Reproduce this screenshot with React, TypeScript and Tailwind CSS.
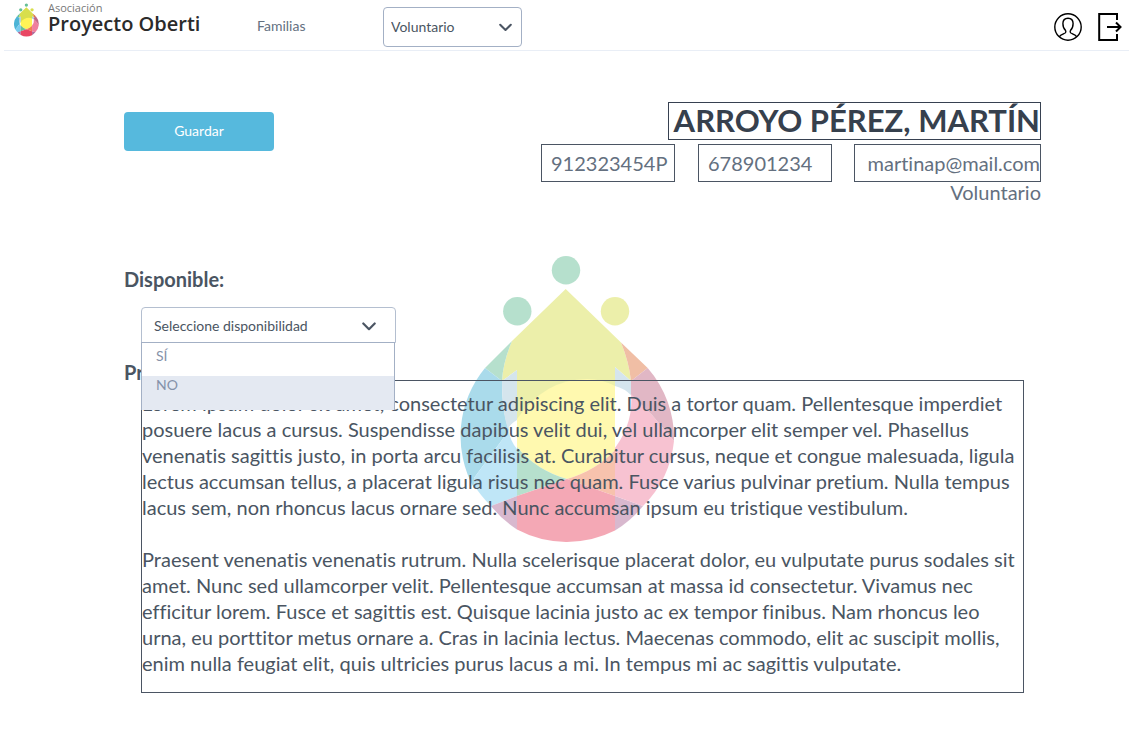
import { useState } from 'react';

function DropLogo({ className }: { className: string }) {
  return (
    <svg viewBox="459 256 216 287" className={className} aria-hidden="true">
      <circle cx="566" cy="270.3" r="14.2" fill="#4bb484" />
      <circle cx="517.3" cy="311.2" r="14.2" fill="#4bb484" />
      <circle cx="615" cy="311.2" r="14.2" fill="#d2d92d" />
      <path d="M565.7 289 L512 341 Q503 362 502 381 L517 370 V420 L530 425 L600 400 L615 388 V367 L631 381 Q629 362 621 342.5 Z" fill="#d2d92d" />
      <path d="M512 341 L485 368 L502 381 Q503 362 512 341 Z" fill="#4bb484" />
      <path d="M621 342.5 L647.7 368 L631 381 Q629 362 621 342.5 Z" fill="#da5e21" />
      <path d="M485 368 A107 107 0 0 0 474 488 V478 L502 440 L509 430 Q502 412 502 381 Z" fill="#2da7cf" />
      <path d="M474 478 L502 440 L508 428 Q510 441 517 449 V496 L491 506 Q480 495 474 485 Z" fill="#61c3ed" />
      <path d="M502 381 L517 370 V420 Q510 424 508 429 Q502 412 502 381 Z" fill="#98c0d4" />
      <path d="M615 367 L631 381 L632 396 Q624 388 615 386 Z" fill="#98c0d4" />
      <path d="M517 419 Q545 379 587 379 Q602 379 615 386 V450 Q597 470 567 479 Q536 470 517 447 Z" fill="#fff239" />
      <path d="M517 447 Q536 470 567 479 L517 496 Z" fill="#4bb484" />
      <path d="M615 450 Q597 470 567 479 L615 496 Z" fill="#ed6934" />
      <path d="M567 479 L517 496 V529.5 A107 107 0 0 0 615 530.5 V496 Z" fill="#e62848" />
      <path d="M491 506 L517 496 V529.5 A107 107 0 0 1 491 506 Z" fill="#a05087" />
      <path d="M643 506 L615 496 V530.5 A107 107 0 0 0 643 506 Z" fill="#a05087" />
      <path d="M631 393 Q634 422 615 448 V496 L643 506 A107 107 0 0 0 674 441 L652 415 Z" fill="#ed698e" />
      <path d="M647.7 368 A107 107 0 0 1 674 441 L652 415 L631 394 V381 Z" fill="#b64d70" />
    </svg>
  );
}

function Chevron({ className }: { className: string }) {
  return (
    <svg viewBox="0 0 14 9" className={className} fill="none" stroke="currentColor" strokeWidth="2.2" strokeLinecap="round" strokeLinejoin="round" aria-hidden="true">
      <path d="M1.3 1.5 L7 7.2 L12.7 1.5" />
    </svg>
  );
}

const observations = `Lorem ipsum dolor sit amet, consectetur adipiscing elit. Duis a tortor quam. Pellentesque imperdiet
posuere lacus a cursus. Suspendisse dapibus velit dui, vel ullamcorper elit semper vel. Phasellus
venenatis sagittis justo, in porta arcu facilisis at. Curabitur cursus, neque et congue malesuada, ligula
lectus accumsan tellus, a placerat ligula risus nec quam. Fusce varius pulvinar pretium. Nulla tempus
lacus sem, non rhoncus lacus ornare sed. Nunc accumsan ipsum eu tristique vestibulum.

Praesent venenatis venenatis rutrum. Nulla scelerisque placerat dolor, eu vulputate purus sodales sit
amet. Nunc sed ullamcorper velit. Pellentesque accumsan at massa id consectetur. Vivamus nec
efficitur lorem. Fusce et sagittis est. Quisque lacinia justo ac ex tempor finibus. Nam rhoncus leo
urna, eu porttitor metus ornare a. Cras in lacinia lectus. Maecenas commodo, elit ac suscipit mollis,
enim nulla feugiat elit, quis ultricies purus lacus a mi. In tempus mi ac sagittis vulputate.`;

const field = 'h-[38px] border border-[#4b5563] bg-transparent text-[20px] text-[#64707f] outline-none';

function Header() {
  return (
    <header className="ml-1 mr-[13px] flex h-[51px] items-start border-b border-[#e9eef6]">
      <a href="#inicio" className="flex w-[253px] shrink-0 gap-[9px] pl-[10px]">
        <DropLogo className="mt-[3px] h-[34px] w-[25px] opacity-85" />
        <span className="font-['Open_Sans',sans-serif]">
          <span className="block text-[11px] leading-4 text-[#777777]">Asociación</span>
          <span className="block text-[20px] leading-4 font-semibold text-[#2b2b2b]">Proyecto Oberti</span>
        </span>
      </a>
      <nav className="flex items-start pt-[7px]">
        <a href="#familias" className="w-[126px] text-[14px] leading-[38px] text-[#64707f]">Familias</a>
        <div className="relative">
          <select aria-label="Sección" className="h-10 w-[139px] appearance-none rounded border border-[#a3b0c5] bg-white px-[7px] pb-[2px] text-[14px] text-[#4a5562] outline-none">
            <option>Voluntario</option>
          </select>
          <Chevron className="pointer-events-none absolute top-4 right-[10px] h-[9px] w-[13px] text-[#4b5563]" />
        </div>
      </nav>
      <div className="ml-auto flex gap-4 pt-[13px] pr-[7px] text-black">
        <button type="button" aria-label="Perfil">
          <svg viewBox="0 0 28 28" className="size-7" fill="none" stroke="currentColor" strokeWidth="1.4">
            <circle cx="14" cy="14" r="13.2" />
            <path d="M5.2 23.8 C6.5 21.6 9.5 21 11.2 20 C12 19.5 11.9 18.2 11.5 17.4 C9.8 16 8.9 13.4 8.9 10.6 C8.9 7.2 11 5.2 14 5.2 C17 5.2 19.1 7.2 19.1 10.6 C19.1 13.4 18.2 16 16.5 17.4 C16.1 18.2 16 19.5 16.8 20 C18.5 21 21.5 21.6 22.8 23.8" />
          </svg>
        </button>
        <button type="button" aria-label="Salir">
          <svg viewBox="0 0 24 28" className="h-7 w-6" fill="none" stroke="currentColor" strokeWidth="2">
            <path d="M19 7 V1 H1.2 V27 H19 V21" />
            <path d="M9 14 H22.5 M18 9.5 L22.5 14 L18 18.5" />
          </svg>
        </button>
      </div>
    </header>
  );
}

export default function App() {
  const [available, setAvailable] = useState('');
  const [open, setOpen] = useState(true);

  const choose = (value: string) => {
    setAvailable(value);
    setOpen(false);
  };

  return (
    <div className="bg-white font-['Lato',sans-serif] [font-variant-ligatures:none]">
      <Header />
      <main className="relative mr-3 ml-1 pr-[89px] pb-10 pl-[120px]">
        <DropLogo className="pointer-events-none absolute top-[205px] left-1/2 h-[287px] w-[216px] -translate-x-1/2 opacity-40" />
        <form className="relative">
          <div className="flex items-start justify-between pt-[51px]">
            <button type="button" className="mt-[10px] h-[39px] w-[150px] rounded bg-[#56b9dd] pb-[2px] text-[14px] text-white">Guardar</button>
            <div className="flex flex-col items-end">
              <input aria-label="Nombre" defaultValue="ARROYO PÉREZ, MARTÍN" className="h-[38px] w-[373px] border border-[#374151] bg-transparent pb-[2px] text-right text-[31px] font-bold text-[#36404d] outline-none" />
              <div className="mt-1 flex">
                <input aria-label="DNI" defaultValue="912323454P" className={`${field} w-[134px] pl-[9px]`} />
                <input aria-label="Teléfono" defaultValue="678901234" className={`${field} ml-[23px] w-[134px] pl-[9px]`} />
                <input aria-label="Correo" defaultValue="martinap@mail.com" className={`${field} ml-[22px] w-[187px] text-right`} />
              </div>
              <p className="text-[20px] leading-5 text-[#64707f]">Voluntario</p>
            </div>
          </div>

          <div className="pt-[65px]">
            <label htmlFor="disponible" className="block text-[20px] leading-6 font-bold text-[#4a5562]">Disponible:</label>
            <div className="relative mt-4 ml-[17px] w-[255px]">
              <select
                id="disponible"
                value={available}
                onMouseDown={(e) => {
                  e.preventDefault();
                  setOpen(!open);
                }}
                onChange={(e) => choose(e.target.value)}
                className="block h-9 w-full appearance-none rounded-t border border-[#b4bfd0] bg-white px-3 text-[14px] text-[#4a5562] outline-none"
              >
                <option value="">Seleccione disponibilidad</option>
                <option value="SÍ">SÍ</option>
                <option value="NO">NO</option>
              </select>
              <Chevron className="pointer-events-none absolute top-[15px] right-5 h-[9px] w-[14px] text-[#4b5563]" />
              {open && (
                <ul className="absolute top-[35px] left-0 z-10 w-[254px] border-x border-t border-[#a3b0c5] bg-white text-[14px] leading-[18px] text-[#8592a9]">
                  <li>
                    <button type="button" onClick={() => choose('SÍ')} className="flex h-[33px] w-full px-[14px] pt-1">SÍ</button>
                  </li>
                  <li>
                    <button type="button" onClick={() => choose('NO')} className="flex h-[34px] w-full bg-[#e4e9f2] px-[14px]">NO</button>
                  </li>
                </ul>
              )}
            </div>
          </div>

          <div className="pt-[21px]">
            <label htmlFor="presentacion" className="block text-[20px] leading-4 font-bold text-[#4a5562]">Presentación:</label>
            <div className="pr-[17px] pl-[17px]">
              <textarea
                id="presentacion"
                rows={11}
                defaultValue={observations}
                className="block w-full resize-none overflow-hidden border border-[#4b5563] bg-transparent pt-[9px] pb-4 text-[20px] leading-[26px] text-[#4a5562] outline-none"
              />
            </div>
          </div>
        </form>
      </main>
    </div>
  );
}
